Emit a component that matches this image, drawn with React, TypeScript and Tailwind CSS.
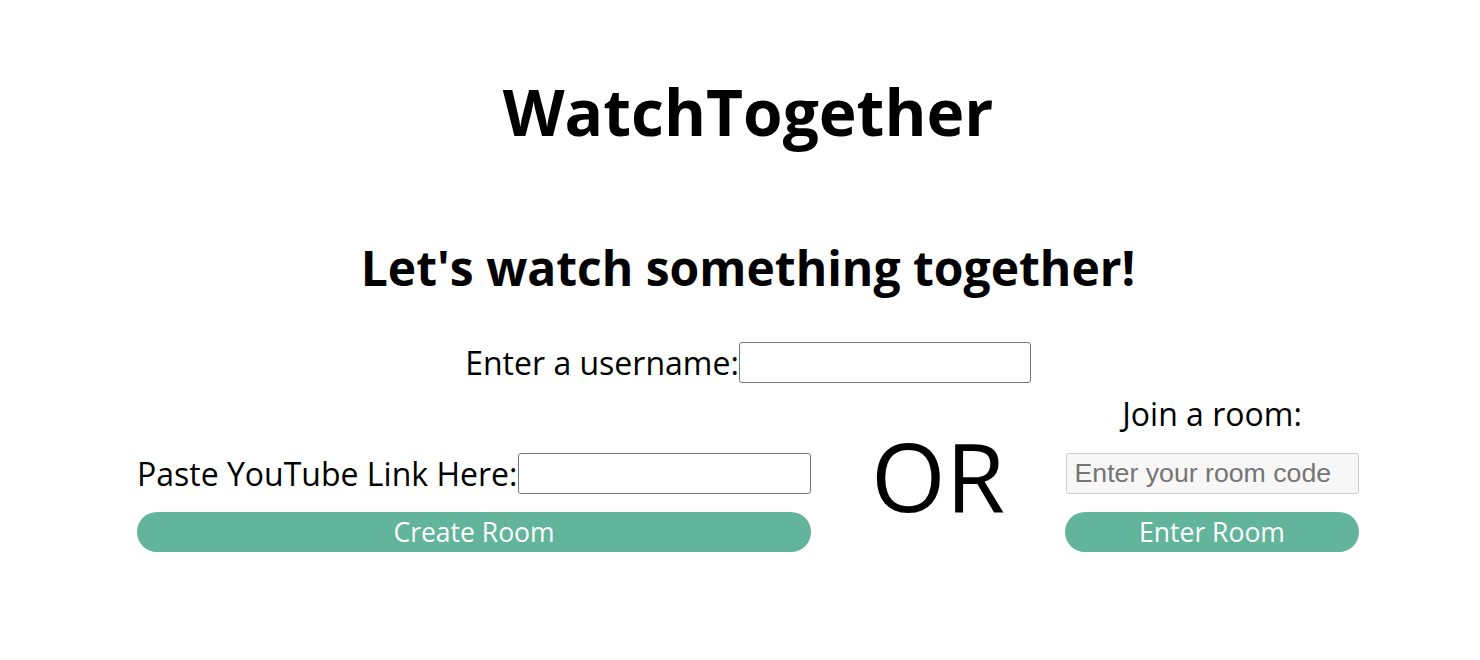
import { useState } from 'react'

export default function App() {
  const [username, setUsername] = useState('')
  const [link, setLink] = useState('')
  const [code, setCode] = useState('')

  return (
    <div className="min-h-[660px] bg-white pl-4 text-black font-['Open_Sans',sans-serif]">
      <div className="flex flex-col items-center">
        <h1 className="mt-[68px] text-[64px] font-bold leading-[88px]">WatchTogether</h1>

        <h2 className="mt-[82px] text-[48px] font-bold leading-[60px]">Let's watch something together!</h2>

        <div className="mt-[44px] flex items-end text-[32px] leading-[40px]">
          <label htmlFor="username">Enter a username:</label>
          <input
            id="username"
            value={username}
            onChange={e => setUsername(e.target.value)}
            className="w-[292px] h-[41px] border border-[#767676] rounded-[3px] px-1 text-[24px]"
          />
        </div>

        {/* Create / join */}
        <div className="mt-[11px] flex items-end">
          <div className="w-[674px] flex flex-col">
            <div className="flex items-end text-[32px] leading-[40px]">
              <label htmlFor="link" className="flex-1">Paste YouTube Link Here:</label>
              <input
                id="link"
                value={link}
                onChange={e => setLink(e.target.value)}
                className="w-[293px] h-[41px] border border-[#767676] rounded-[3px] px-1 text-[24px]"
              />
            </div>
            <button className="mt-[18px] h-[40px] w-full rounded-full bg-[#62b59a] text-white text-[26.5px] leading-[40px]">
              Create Room
            </button>
          </div>

          <div className="w-[254px] flex justify-center self-center pt-[4px] text-[96px] leading-[110px]">OR</div>

          <div className="w-[294px] flex flex-col items-center">
            <div className="text-[32px] leading-[40px]">Join a room:</div>
            <input
              value={code}
              onChange={e => setCode(e.target.value)}
              placeholder="Enter your room code"
              className="mt-[19px] w-[293px] h-[41px] border border-[#cccccc] bg-[#f7f7f7] rounded-[3px] px-2 text-[26.7px] font-['Liberation_Sans',Arial,sans-serif] placeholder:text-[#757575]"
            />
            <button className="mt-[18px] h-[40px] w-full rounded-full bg-[#62b59a] text-white text-[26.5px] leading-[40px]">
              Enter Room
            </button>
          </div>
        </div>
      </div>
    </div>
  )
}
